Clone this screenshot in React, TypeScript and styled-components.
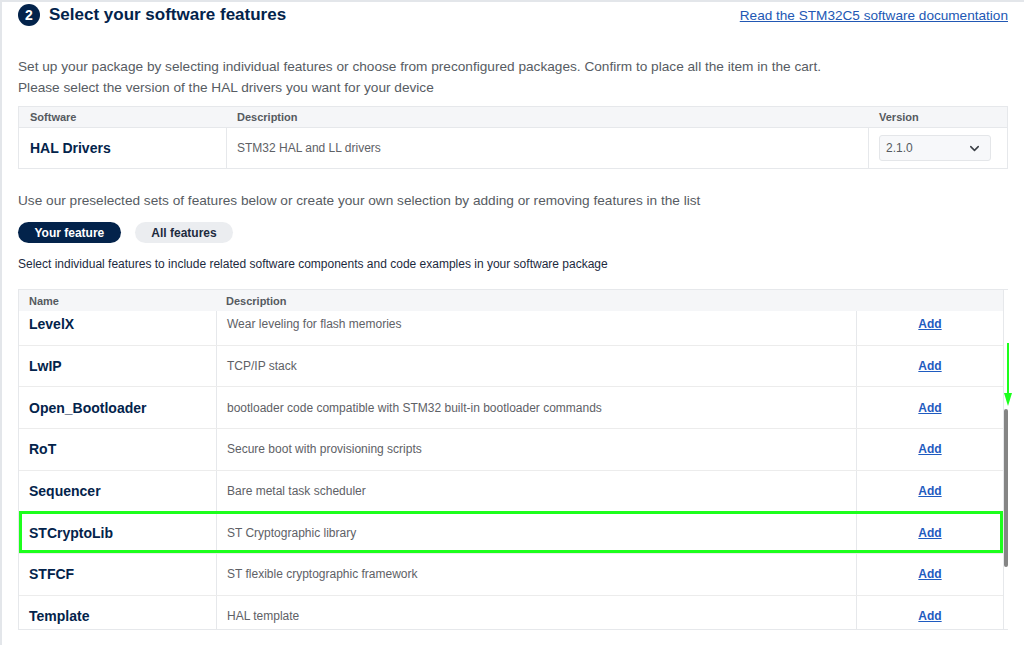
import React, { useEffect, useRef } from 'react';
import styled, { createGlobalStyle } from 'styled-components';
import { ChevronDown } from 'lucide-react';

const GlobalStyle = createGlobalStyle`
  html, body {
    margin: 0;
    padding: 0;
    background: #ffffff;
    font-family: "Liberation Sans", Arial, sans-serif;
  }
  * { box-sizing: border-box; }
`;

const navy = '#03234b';
const line = '#e6e8eb';

// Styled Components:

const Frame = styled.div`
  min-height: 100vh;
  border-top: 2px solid #e3e6ea;
  border-left: 2px solid #e3e6ea;
  padding: 2px 16px 0 16px;
`;

const Header = styled.div`
  display: flex;
  justify-content: space-between;
  align-items: center;
  height: 22px;
`;

const TitleGroup = styled.div`
  display: flex;
  align-items: center;
  gap: 9px;
`;

const Step = styled.span`
  width: 22px;
  height: 22px;
  border-radius: 50%;
  background: ${navy};
  color: #fff;
  font-weight: bold;
  font-size: 14px;
  display: flex;
  align-items: center;
  justify-content: center;
`;

const Title = styled.h2`
  margin: 0;
  font-size: 17px;
  font-weight: bold;
  color: ${navy};
`;

const DocLink = styled.a`
  color: #2258b4;
  font-size: 13.6px;
  text-decoration: underline;
`;

const Intro = styled.p`
  margin: 30px 0 0;
  font-size: 13.65px;
  line-height: 21px;
  color: #575c63;
`;

const HalTable = styled.div`
  margin-top: 8px;
  border: 1px solid ${line};
`;

const HalRow = styled.div<{ $head?: boolean }>`
  display: grid;
  grid-template-columns: 207px 642px 1fr;
  height: ${p => (p.$head ? '20px' : '41px')};
  background: ${p => (p.$head ? '#f5f6f8' : '#fff')};
  border-top: ${p => (p.$head ? 'none' : `1px solid ${line}`)};
`;

const Cell = styled.div<{ $pad: number; $divider?: boolean; $center?: boolean }>`
  display: flex;
  align-items: center;
  justify-content: ${p => (p.$center ? 'center' : 'flex-start')};
  padding-left: ${p => p.$pad}px;
  border-left: ${p => (p.$divider ? `1px solid ${line}` : 'none')};
  min-width: 0;
`;

const HeadText = styled.span`
  font-size: 11px;
  font-weight: bold;
  color: #555a60;
`;

const NameText = styled.span`
  font-size: 14px;
  font-weight: bold;
  color: ${navy};
`;

const DescText = styled.span`
  font-size: 12px;
  color: #5e6166;
`;

const Select = styled.div`
  width: 112px;
  height: 26px;
  border: 1px solid #e4e6e9;
  border-radius: 3px;
  background: #f7f8fa;
  display: flex;
  align-items: center;
  justify-content: space-between;
  padding: 0 8px 0 6px;
  font-size: 12px;
  color: #555a60;
`;

const Lead = styled.p`
  margin: 21px 0 0;
  font-size: 13.65px;
  line-height: 21px;
  color: #575c63;
`;

const Pills = styled.div`
  display: flex;
  gap: 14px;
  margin-top: 11px;
`;

const Pill = styled.button<{ $active?: boolean }>`
  height: 21px;
  padding: 0 16.5px;
  border: none;
  border-radius: 11px;
  font-family: inherit;
  font-size: 12px;
  font-weight: bold;
  background: ${p => (p.$active ? navy : '#ebedf0')};
  color: ${p => (p.$active ? '#fff' : '#1d2b3e')};
`;

const Hint = styled.p`
  margin: 12px 0 0;
  font-size: 12px;
  line-height: 18px;
  color: #1c2a3e;
`;

const FeatureWrap = styled.div`
  position: relative;
  margin-top: 16px;
  height: 341px;
  border-top: 1px solid ${line};
  border-bottom: 1px solid ${line};
  display: flex;
`;

const FeatureTable = styled.div`
  flex: 1;
  display: flex;
  flex-direction: column;
  border-left: 1px solid ${line};
  border-right: 1px solid ${line};
`;

const FeatureHead = styled.div`
  display: grid;
  grid-template-columns: 197px 640px 1fr;
  height: 21px;
  background: #f5f6f8;
`;

const FeatureBody = styled.div`
  flex: 1;
  overflow: hidden;
`;

const FeatureRow = styled.div`
  position: relative;
  display: grid;
  grid-template-columns: 197px 640px 1fr;
  height: 41.67px;
  border-bottom: 1px solid #ececec;
`;

const AddLink = styled.a`
  font-size: 12px;
  font-weight: bold;
  color: #1f5bc0;
  text-decoration: underline;
`;

const Track = styled.div`
  position: relative;
  width: 4px;
`;

const Thumb = styled.div`
  position: absolute;
  left: 0;
  width: 4px;
  background: #858585;
  border-radius: 2px;
`;

const Highlight = styled.div`
  position: absolute;
  top: -1px;
  bottom: 0;
  left: 0;
  right: 0;
  border: 3px solid #1cff1c;
  pointer-events: none;
`;

const Arrow = styled.svg`
  position: absolute;
  right: -5px;
  top: 53px;
`;

const features = [
  { name: 'LevelX', desc: 'Wear leveling for flash memories' },
  { name: 'LwIP', desc: 'TCP/IP stack' },
  { name: 'Open_Bootloader', desc: 'bootloader code compatible with STM32 built-in bootloader commands' },
  { name: 'RoT', desc: 'Secure boot with provisioning scripts' },
  { name: 'Sequencer', desc: 'Bare metal task scheduler' },
  { name: 'STCryptoLib', desc: 'ST Cryptographic library', marked: true },
  { name: 'STFCF', desc: 'ST flexible cryptographic framework' },
  { name: 'Template', desc: 'HAL template' },
];

function App() {
  const bodyRef = useRef<HTMLDivElement>(null);

  useEffect(() => {
    // list is scrolled a few pixels under the header
    if (bodyRef.current) bodyRef.current.scrollTop = 7;
  }, []);

  return (
    <>
      <GlobalStyle />
      <Frame>
        <Header>
          <TitleGroup>
            <Step>2</Step>
            <Title>Select your software features</Title>
          </TitleGroup>
          <DocLink href="#">Read the STM32C5 software documentation</DocLink>
        </Header>

        <Intro>
          Set up your package by selecting individual features or choose from preconfigured packages. Confirm to place all the item in the cart.
          <br />
          Please select the version of the HAL drivers you want for your device
        </Intro>

        {/* HAL drivers */}
        <HalTable>
          <HalRow $head>
            <Cell $pad={11}><HeadText>Software</HeadText></Cell>
            <Cell $pad={11}><HeadText>Description</HeadText></Cell>
            <Cell $pad={11}><HeadText>Version</HeadText></Cell>
          </HalRow>
          <HalRow>
            <Cell $pad={11}><NameText>HAL Drivers</NameText></Cell>
            <Cell $pad={10} $divider><DescText>STM32 HAL and LL drivers</DescText></Cell>
            <Cell $pad={10} $divider>
              <Select>
                <span>2.1.0</span>
                <ChevronDown size={15} strokeWidth={2.4} color="#3a3f45" />
              </Select>
            </Cell>
          </HalRow>
        </HalTable>

        <Lead>Use our preselected sets of features below or create your own selection by adding or removing features in the list</Lead>

        <Pills>
          <Pill $active>Your feature</Pill>
          <Pill>All features</Pill>
        </Pills>

        <Hint>Select individual features to include related software components and code examples in your software package</Hint>

        {/* Features */}
        <FeatureWrap>
          <FeatureTable>
            <FeatureHead>
              <Cell $pad={10}><HeadText>Name</HeadText></Cell>
              <Cell $pad={10}><HeadText>Description</HeadText></Cell>
              <Cell $pad={0} />
            </FeatureHead>
            <FeatureBody ref={bodyRef}>
              {features.map(f => (
                <FeatureRow key={f.name}>
                  <Cell $pad={10}><NameText>{f.name}</NameText></Cell>
                  <Cell $pad={10} $divider><DescText>{f.desc}</DescText></Cell>
                  <Cell $pad={0} $divider $center><AddLink href="#">Add</AddLink></Cell>
                  {f.marked && <Highlight />}
                </FeatureRow>
              ))}
            </FeatureBody>
          </FeatureTable>
          <Track>
            <Thumb style={{ top: 119, height: 158 }} />
          </Track>
          <Arrow width="10" height="64" viewBox="0 0 10 64">
            <line x1="5" y1="0" x2="5" y2="54" stroke="#1cff1c" strokeWidth="2" />
            <polygon points="1,50 9,50 5,63" fill="#1cff1c" />
          </Arrow>
        </FeatureWrap>
      </Frame>
    </>
  );
}

export default App;
